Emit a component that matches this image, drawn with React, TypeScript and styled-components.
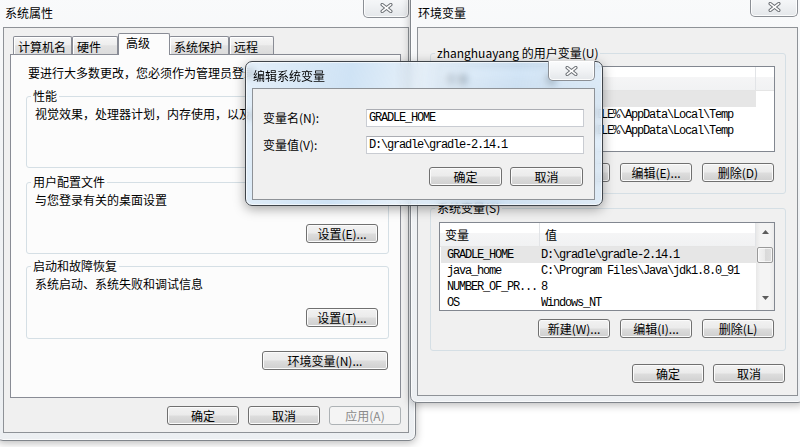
import styled, { createGlobalStyle, css } from "styled-components";

const uiFont = `"Noto Sans CJK SC", "Liberation Sans", sans-serif`;
const monoFont = `"Liberation Mono", "DejaVu Sans Mono", monospace`;

const GlobalStyle = createGlobalStyle`
  html, body {
    margin: 0;
    padding: 0;
    background: #ffffff;
  }
  body {
    font-family: ${uiFont};
    font-size: 12px;
    color: #000;
  }
`;

const Desktop = styled.div`
  position: relative;
  width: 800px;
  height: 447px;
  overflow: hidden;
  background: #ffffff;
`;

// windows sit on the desktop at their own places
const Window = styled.div<{ $x: number; $y: number; $w: number; $h: number; $z: number; $active?: boolean }>`
  position: absolute;
  left: ${(p) => p.$x}px;
  top: ${(p) => p.$y}px;
  width: ${(p) => p.$w}px;
  height: ${(p) => p.$h}px;
  z-index: ${(p) => p.$z};
  box-sizing: border-box;
  display: flex;
  flex-direction: column;
  border-radius: 7px;
  ${(p) =>
    p.$active
      ? css`
          border: 1px solid #3f444a;
          background: linear-gradient(
              100deg,
              rgba(255, 255, 255, 0.5) 0%,
              rgba(255, 255, 255, 0.1) 28%,
              rgba(255, 255, 255, 0.55) 46%,
              rgba(255, 255, 255, 0.15) 72%,
              rgba(255, 255, 255, 0.45) 100%
            ),
            rgba(160, 200, 236, 0.55);
          backdrop-filter: blur(3px);
          box-shadow: inset 0 0 0 1px rgba(255, 255, 255, 0.6), 0 3px 12px rgba(0, 0, 0, 0.35);
        `
      : css`
          border: 1px solid #80858b;
          background: linear-gradient(180deg, #f9fafb 0%, #f1f3f5 40%, #eceff2 100%);
          box-shadow: inset 0 0 0 1px rgba(255, 255, 255, 0.7), 0 2px 8px rgba(0, 0, 0, 0.28);
        `}
`;

const TitleBar = styled.div<{ $h: number }>`
  display: flex;
  align-items: flex-start;
  height: ${(p) => p.$h}px;
  flex-shrink: 0;
`;

const WinTitle = styled.div<{ $top: number; $left: number }>`
  margin: ${(p) => p.$top}px 0 0 ${(p) => p.$left}px;
  line-height: 16px;
  white-space: nowrap;
  color: #000;
`;

const CloseButton = styled.div<{ $w: number; $h: number; $mr: number }>`
  box-sizing: border-box;
  width: ${(p) => p.$w}px;
  height: ${(p) => p.$h}px;
  margin: -1px ${(p) => p.$mr}px 0 auto;
  border: 1px solid #8b8f95;
  border-top: none;
  border-radius: 0 0 5px 5px;
  background: linear-gradient(180deg, #fbfcfd 0%, #f1f3f5 50%, #e4e7ea 100%);
  box-shadow: inset 0 0 0 1px rgba(255, 255, 255, 0.85);
  display: flex;
  align-items: flex-end;
  justify-content: center;
  padding-bottom: 4px;
`;

const CloseGlyph = () => (
  <svg width="13" height="10" viewBox="0 0 13 10">
    <path d="M2.2 1.6 L10.8 8.4 M10.8 1.6 L2.2 8.4" stroke="#6c7075" strokeWidth="3.4" strokeLinecap="round" />
    <path d="M2.2 1.6 L10.8 8.4 M10.8 1.6 L2.2 8.4" stroke="#ffffff" strokeWidth="1.5" strokeLinecap="round" />
  </svg>
);

const Client = styled.div<{ $m: string }>`
  flex: 1;
  min-height: 0;
  margin: ${(p) => p.$m};
  border: 1px solid #8e9297;
  background: #f0f0f0;
  display: flex;
  flex-direction: column;
`;

/* ---------- common controls ---------- */

const Button = styled.div<{ $w: number; $disabled?: boolean }>`
  box-sizing: border-box;
  flex-shrink: 0;
  width: ${(p) => p.$w}px;
  height: 19px;
  border: 1px solid #707070;
  border-radius: 3px;
  background: linear-gradient(180deg, #f2f2f2 0%, #ebebeb 48%, #dddddd 52%, #cfcfcf 100%);
  box-shadow: inset 0 0 0 1px #fbfbfb;
  display: flex;
  align-items: center;
  justify-content: center;
  line-height: 16px;
  white-space: nowrap;
  ${(p) =>
    p.$disabled &&
    css`
      border-color: #adb2b5;
      background: #f4f4f4;
      box-shadow: none;
      color: #8a8a8a;
    `}
`;

const GroupBox = styled.div<{ $h: number; $mt: number }>`
  box-sizing: border-box;
  height: ${(p) => p.$h}px;
  margin-top: ${(p) => p.$mt}px;
  border: 1px solid #d5dfe5;
  border-radius: 3px;
  padding: 0 10px 0 8px;
  display: flex;
  flex-direction: column;
`;

const GroupLabel = styled.div<{ $bg: string }>`
  align-self: flex-start;
  margin: -9px 0 0 -4px;
  padding: 0 2px;
  background: ${(p) => p.$bg};
  line-height: 16px;
  white-space: nowrap;
`;

const GroupText = styled.div`
  margin-top: 2px;
  line-height: 16px;
  white-space: nowrap;
`;

const GroupButton = styled(Button)`
  align-self: flex-end;
  margin-top: 16px;
`;

const ButtonRow = styled.div<{ $mt: number; $gap: number; $pr: number }>`
  display: flex;
  justify-content: flex-end;
  gap: ${(p) => p.$gap}px;
  margin-top: ${(p) => p.$mt}px;
  padding-right: ${(p) => p.$pr}px;
`;

/* ---------- system properties ---------- */

const TabStrip = styled.div`
  display: flex;
  align-items: flex-end;
  height: 26px;
  padding-left: 9px;
  flex-shrink: 0;
`;

const Tab = styled.div<{ $w: number; $selected?: boolean }>`
  box-sizing: border-box;
  width: ${(p) => p.$w}px;
  border: 1px solid #898c95;
  border-bottom: none;
  border-radius: 2px 2px 0 0;
  line-height: 16px;
  white-space: nowrap;
  ${(p) =>
    p.$selected
      ? css`
          position: relative;
          z-index: 1;
          height: 22px;
          margin: 0 -1px -1px 0;
          padding: 1px 0 0 7px;
          background: #fcfcfc;
        `
      : css`
          height: 18px;
          padding: 2px 0 0 4px;
          background: linear-gradient(180deg, #f6f6f6 0%, #eeeeee 45%, #e2e2e2 52%, #dcdcdc 100%);
          box-shadow: inset 1px 1px 0 #ffffff;
        `}
`;

const TabPanel = styled.div`
  box-sizing: border-box;
  height: 344px;
  margin: 0 7px 0 6px;
  border: 1px solid #898c95;
  background: #fcfcfc;
  padding: 0 11px 0 15px;
  display: flex;
  flex-direction: column;
`;

const Intro = styled.div`
  margin: 10px 0 0 2px;
  line-height: 16px;
  white-space: nowrap;
`;

const EnvButton = styled(Button)`
  align-self: flex-end;
  margin: 12px 1px 0 0;
`;

/* ---------- environment variables ---------- */

const EnvBody = styled.div`
  padding: 0 11px 0 12px;
  display: flex;
  flex-direction: column;
`;

const ListBox = styled.div<{ $h: number; $mt: number }>`
  box-sizing: border-box;
  height: ${(p) => p.$h}px;
  margin-top: ${(p) => p.$mt}px;
  border: 1px solid #828790;
  background: #ffffff;
  display: flex;
  overflow: hidden;
`;

const ListMain = styled.div`
  flex: 1;
  min-width: 0;
  display: flex;
  flex-direction: column;
`;

const ListHeader = styled.div`
  display: flex;
  height: 24px;
  flex-shrink: 0;
  box-sizing: border-box;
  border-bottom: 1px solid #e5e5e5;
  background: linear-gradient(180deg, #ffffff 0%, #ffffff 42%, #f5f5f6 44%, #f1f2f3 100%);
`;

const HeaderCell = styled.div<{ $w?: number }>`
  box-sizing: border-box;
  ${(p) => (p.$w ? `width: ${p.$w}px;` : "flex: 1;")}
  border-right: ${(p) => (p.$w ? "1px solid #e2e4e7" : "none")};
  padding-left: 5px;
  line-height: 24px;
  white-space: nowrap;
`;

const ListRow = styled.div<{ $selected?: boolean }>`
  display: grid;
  grid-template-columns: 100px 1fr;
  width: 315px;
  height: 16px;
  margin-left: 1px;
  flex-shrink: 0;
  background: ${(p) => (p.$selected ? "#e6e6e6" : "transparent")};
  font-family: ${monoFont};
  font-size: 12px;
  letter-spacing: -1.2px;
  line-height: 16px;
  white-space: nowrap;
`;

const RowCell = styled.span<{ $pad: number }>`
  padding-left: ${(p) => p.$pad}px;
  overflow: hidden;
`;

const ScrollBar = styled.div`
  width: 18px;
  flex-shrink: 0;
  display: flex;
  flex-direction: column;
  background: linear-gradient(90deg, #e8e8e8 0%, #f4f4f4 25%, #f4f4f4 75%, #ebebeb 100%);
`;

const ScrollArrow = styled.div<{ $mb?: number }>`
  height: 17px;
  flex-shrink: 0;
  margin-bottom: ${(p) => p.$mb ?? 0}px;
  display: flex;
  align-items: center;
  justify-content: center;
`;

const ScrollTrack = styled.div`
  flex: 1;
  padding: 7px 1px 0 1px;
`;

const ScrollThumb = styled.div`
  box-sizing: border-box;
  height: 16px;
  border: 1px solid #9a9a9a;
  border-radius: 2px;
  background: linear-gradient(90deg, #f4f4f4 0%, #e9e9e9 50%, #d9d9d9 52%, #dedede 100%);
  box-shadow: inset 0 0 0 1px rgba(255, 255, 255, 0.7);
`;

const Arrow = ({ up }: { up?: boolean }) => (
  <svg width="7" height="4" viewBox="0 0 7 4">
    <path d={up ? "M0 4 L3.5 0 L7 4 Z" : "M0 0 L3.5 4 L7 0 Z"} fill="#5c5c5c" />
  </svg>
);

/* ---------- edit dialog ---------- */

const Form = styled.div`
  padding: 20px 10px 0 10px;
  display: flex;
  flex-direction: column;
  gap: 9px;
`;

const FormRow = styled.div`
  display: flex;
  align-items: center;
`;

const FieldLabel = styled.div`
  width: 103px;
  flex-shrink: 0;
  line-height: 16px;
  white-space: nowrap;
`;

const TextBox = styled.div`
  flex: 1;
  box-sizing: border-box;
  height: 18px;
  border: 1px solid #c9ccd2;
  border-top-color: #abadb3;
  background: #ffffff;
  padding-left: 2px;
  font-family: ${monoFont};
  font-size: 12px;
  letter-spacing: -1.2px;
  line-height: 16px;
  white-space: nowrap;
`;

type Var = { name: string; value: string; selected?: boolean };

const userVars: Var[] = [
  { name: "PATH", value: "C:\\bin", selected: true },
  { name: "TEMP", value: "%USERPROFILE%\\AppData\\Local\\Temp" },
  { name: "TMP", value: "%USERPROFILE%\\AppData\\Local\\Temp" },
];

const systemVars: Var[] = [
  { name: "GRADLE_HOME", value: "D:\\gradle\\gradle-2.14.1", selected: true },
  { name: "java_home", value: "C:\\Program Files\\Java\\jdk1.8.0_91" },
  { name: "NUMBER_OF_PR...", value: "8" },
  { name: "OS", value: "Windows_NT" },
];

const VarRows = ({ vars }: { vars: Var[] }) => (
  <>
    {vars.map((v) => (
      <ListRow key={v.name} $selected={v.selected}>
        <RowCell $pad={6}>{v.name}</RowCell>
        <RowCell $pad={0}>{v.value}</RowCell>
      </ListRow>
    ))}
  </>
);

const App = () => {
  return (
    <Desktop>
      <GlobalStyle />

      <Window $x={-4} $y={-8} $w={420} $h={449} $z={1}>
        <TitleBar $h={34}>
          <WinTitle $top={12} $left={8}>系统属性</WinTitle>
          <CloseButton $w={46} $h={26} $mr={6}>
            <CloseGlyph />
          </CloseButton>
        </TitleBar>
        <Client $m="0 6px 7px 6px">
          <TabStrip>
            <Tab $w={59}>计算机名</Tab>
            <Tab $w={46}>硬件</Tab>
            <Tab $w={52} $selected>
              高级
            </Tab>
            <Tab $w={60}>系统保护</Tab>
            <Tab $w={45}>远程</Tab>
          </TabStrip>
          <TabPanel>
            <Intro>要进行大多数更改，您必须作为管理员登录。</Intro>
            <GroupBox $h={72} $mt={15}>
              <GroupLabel $bg="#fcfcfc">性能</GroupLabel>
              <GroupText>视觉效果，处理器计划，内存使用，以及虚拟内存</GroupText>
            </GroupBox>
            <GroupBox $h={72} $mt={14}>
              <GroupLabel $bg="#fcfcfc">用户配置文件</GroupLabel>
              <GroupText>与您登录有关的桌面设置</GroupText>
              <GroupButton $w={72}>设置(E)...</GroupButton>
            </GroupBox>
            <GroupBox $h={73} $mt={12}>
              <GroupLabel $bg="#fcfcfc">启动和故障恢复</GroupLabel>
              <GroupText>系统启动、系统失败和调试信息</GroupText>
              <GroupButton $w={72}>设置(T)...</GroupButton>
            </GroupBox>
            <EnvButton $w={126}>环境变量(N)...</EnvButton>
          </TabPanel>
          <ButtonRow $mt={8} $gap={9} $pr={7}>
            <Button $w={72}>确定</Button>
            <Button $w={72}>取消</Button>
            <Button $w={72} $disabled>
              应用(A)
            </Button>
          </ButtonRow>
        </Client>
      </Window>

      <Window $x={410} $y={-8} $w={395} $h={411} $z={2}>
        <TitleBar $h={34}>
          <WinTitle $top={12} $left={7}>环境变量</WinTitle>
          <CloseButton $w={48} $h={25} $mr={6}>
            <CloseGlyph />
          </CloseButton>
        </TitleBar>
        <Client $m="0 6px 6px 6px">
          <EnvBody>
            <GroupBox $h={141} $mt={25}>
              <GroupLabel $bg="#f0f0f0">zhanghuayang 的用户变量(U)</GroupLabel>
              <ListBox $h={86} $mt={5}>
                <ListMain>
                  <ListHeader>
                    <HeaderCell $w={100}>变量</HeaderCell>
                    <HeaderCell $w={216}>值</HeaderCell>
                    <HeaderCell />
                  </ListHeader>
                  <VarRows vars={userVars} />
                </ListMain>
              </ListBox>
              <ButtonRow $mt={11} $gap={10} $pr={1}>
                <Button $w={72} />
                <Button $w={72}>编辑(E)...</Button>
                <Button $w={72}>删除(D)</Button>
              </ButtonRow>
            </GroupBox>
            <GroupBox $h={143} $mt={14}>
              <GroupLabel $bg="#f0f0f0">系统变量(S)</GroupLabel>
              <ListBox $h={89} $mt={6}>
                <ListMain>
                  <ListHeader>
                    <HeaderCell $w={100}>变量</HeaderCell>
                    <HeaderCell $w={216}>值</HeaderCell>
                  </ListHeader>
                  <VarRows vars={systemVars} />
                </ListMain>
                <ScrollBar>
                  <ScrollArrow>
                    <Arrow up />
                  </ScrollArrow>
                  <ScrollTrack>
                    <ScrollThumb />
                  </ScrollTrack>
                  <ScrollArrow $mb={4}>
                    <Arrow />
                  </ScrollArrow>
                </ScrollBar>
              </ListBox>
              <ButtonRow $mt={8} $gap={10} $pr={1}>
                <Button $w={72}>新建(W)...</Button>
                <Button $w={72}>编辑(I)...</Button>
                <Button $w={72}>删除(L)</Button>
              </ButtonRow>
            </GroupBox>
            <ButtonRow $mt={13} $gap={9} $pr={1}>
              <Button $w={72}>确定</Button>
              <Button $w={72}>取消</Button>
            </ButtonRow>
          </EnvBody>
        </Client>
      </Window>

      <Window $x={245} $y={61} $w={358} $h={145} $z={3} $active>
        <TitleBar $h={26}>
          <WinTitle $top={6} $left={7}>编辑系统变量</WinTitle>
          <CloseButton $w={47} $h={20} $mr={7}>
            <CloseGlyph />
          </CloseButton>
        </TitleBar>
        <Client $m="0 7px 5px 6px">
          <Form>
            <FormRow>
              <FieldLabel>变量名(N):</FieldLabel>
              <TextBox>GRADLE_HOME</TextBox>
            </FormRow>
            <FormRow>
              <FieldLabel>变量值(V):</FieldLabel>
              <TextBox>D:\gradle\gradle-2.14.1</TextBox>
            </FormRow>
          </Form>
          <ButtonRow $mt={13} $gap={8} $pr={11}>
            <Button $w={73}>确定</Button>
            <Button $w={73}>取消</Button>
          </ButtonRow>
        </Client>
      </Window>
    </Desktop>
  );
};

export default App;
